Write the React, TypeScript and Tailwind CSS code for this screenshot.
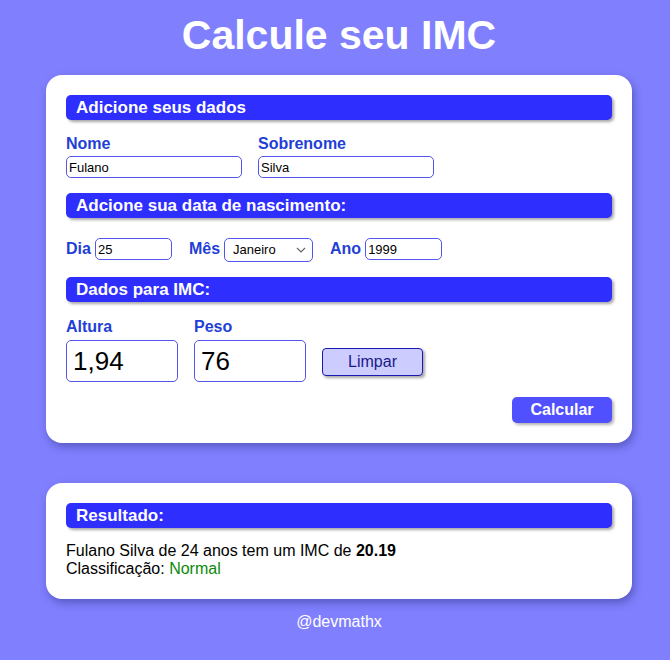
import React from "react";

function SectionBar({ children }: { children: React.ReactNode }) {
  return (
    <div className="flex h-[25px] items-center rounded-[5px] bg-[#2e2eff] pl-[10px] text-[17px] font-bold text-white shadow-[2px_2px_3px_rgba(0,0,0,0.35)]">
      {children}
    </div>
  );
}

const inputSmall =
  "h-[22px] rounded-[5px] border border-[#5555ee] bg-white px-[2px] text-[13px] text-black outline-none";

export default function App() {
  return (
    <div
      className="min-h-[660px] overflow-hidden bg-[#8080ff]"
      style={{ fontFamily: '"Liberation Sans", Arial, sans-serif' }}
    >
      <div className="w-[678px] pt-[11px]">
        <h1 className="text-center text-[41px] leading-[48px] font-bold text-white">Calcule seu IMC</h1>

        <div className="mx-[46px] mt-[16px] rounded-[16px] bg-white px-[20px] pt-[20px] pb-[20px] shadow-[2px_4px_8px_rgba(40,40,120,0.45)]">
          <SectionBar>Adicione seus dados</SectionBar>

          <div className="mt-[14px] flex gap-[16px]">
            <div className="flex flex-col">
              <label className="text-[16px] leading-[19px] font-bold text-[#1f3fd6]">Nome</label>
              <input className={`${inputSmall} mt-[3px] w-[176px]`} defaultValue="Fulano" />
            </div>
            <div className="flex flex-col">
              <label className="text-[16px] leading-[19px] font-bold text-[#1f3fd6]">Sobrenome</label>
              <input className={`${inputSmall} mt-[3px] w-[176px]`} defaultValue="Silva" />
            </div>
          </div>

          <div className="mt-[15px]">
            <SectionBar>Adcione sua data de nascimento:</SectionBar>
          </div>

          <div className="mt-[18px] flex items-center">
            <label className="text-[16px] font-bold text-[#1f3fd6]">Dia</label>
            <input className={`${inputSmall} ml-[4px] w-[77px]`} defaultValue="25" />
            <label className="ml-[17px] text-[16px] font-bold text-[#1f3fd6]">Mês</label>
            <div className="relative ml-[4px] mt-[2px] flex h-[24px] w-[89px] items-center rounded-[5px] border border-[#5555ee] bg-white pl-[8px] text-[13px] text-black">
              Janeiro
              <svg className="absolute right-[6px] top-[8px]" width="10" height="6" viewBox="0 0 10 6">
                <path d="M1 1l4 4 4-4" stroke="#666" strokeWidth="1.2" fill="none" />
              </svg>
            </div>
            <label className="ml-[17px] text-[16px] font-bold text-[#1f3fd6]">Ano</label>
            <input className={`${inputSmall} ml-[4px] w-[77px]`} defaultValue="1999" />
          </div>

          <div className="mt-[15px]">
            <SectionBar>Dados para IMC:</SectionBar>
          </div>

          <div className="mt-[15px] flex items-end gap-[16px]">
            <div className="flex flex-col">
              <label className="text-[16px] leading-[19px] font-bold text-[#1f3fd6]">Altura</label>
              <input
                className="mt-[4px] h-[42px] w-[112px] rounded-[5px] border border-[#5555ee] bg-white px-[6px] text-[26px] text-black outline-none"
                defaultValue="1,94"
              />
            </div>
            <div className="flex flex-col">
              <label className="text-[16px] leading-[19px] font-bold text-[#1f3fd6]">Peso</label>
              <input
                className="mt-[4px] h-[42px] w-[112px] rounded-[5px] border border-[#5555ee] bg-white px-[6px] text-[26px] text-black outline-none"
                defaultValue="76"
              />
            </div>
            <button className="mb-[6px] h-[28px] w-[101px] rounded-[4px] border border-[#1a1ab0] bg-[#ccccff] text-[16px] text-[#1a1a8a] shadow-[2px_2px_3px_rgba(0,0,0,0.35)]">
              Limpar
            </button>
          </div>

          <div className="mt-[15px] flex justify-end">
            <button className="h-[26px] w-[100px] rounded-[5px] bg-[#5050ff] text-[16px] font-bold text-white shadow-[2px_2px_3px_rgba(0,0,0,0.3)]">
              Calcular
            </button>
          </div>
        </div>

        <div className="mx-[46px] mt-[40px] rounded-[16px] bg-white px-[20px] pt-[20px] pb-[21px] shadow-[2px_4px_8px_rgba(40,40,120,0.45)]">
          <SectionBar>Resultado:</SectionBar>
          <div className="mt-[14px] text-[16px] leading-[18px] text-black">
            <p>
              Fulano Silva de 24 anos tem um IMC de <b>20.19</b>
            </p>
            <p>
              Classificação: <span className="text-[#0a8a0a]">Normal</span>
            </p>
          </div>
        </div>

        <p className="mt-[11px] text-center text-[16px] text-white">@devmathx</p>
      </div>
    </div>
  );
}
